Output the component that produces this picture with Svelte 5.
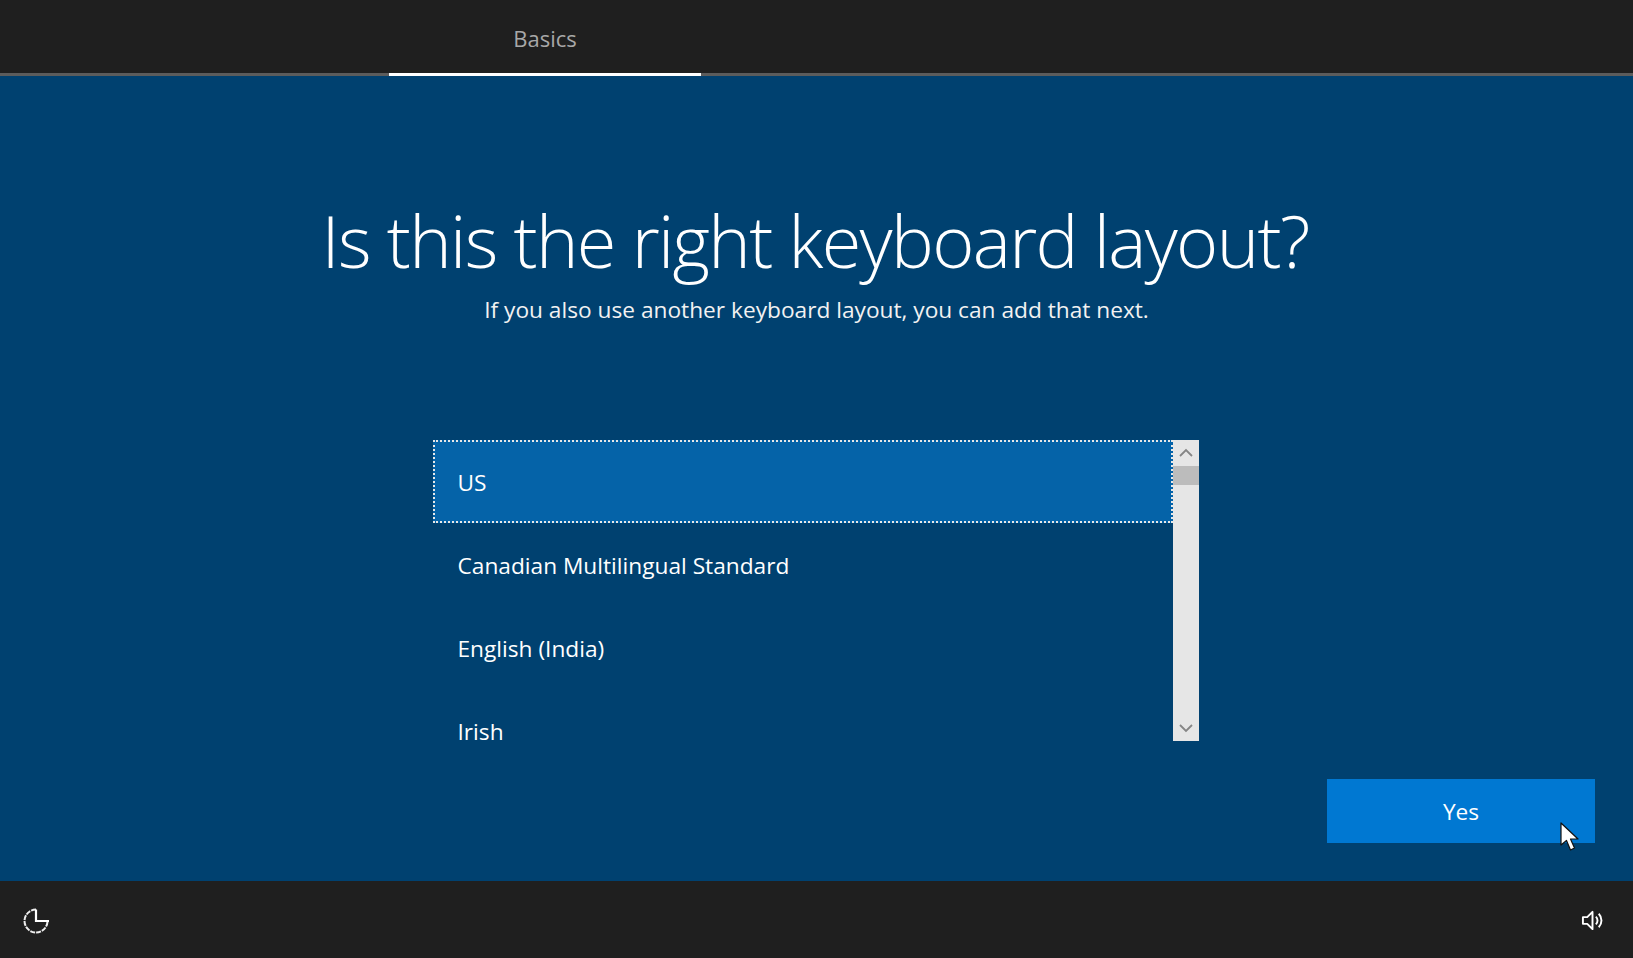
<script>
  const layouts = ["US", "Canadian Multilingual Standard", "English (India)", "Irish"];
  let selected = $state(0);
</script>

<div class="page">
  <header class="topbar">
    <div class="tab">Basics</div>
  </header>

  <main class="main">
    <h1>Is this the right keyboard layout?</h1>
    <p class="sub">If you also use another keyboard layout, you can add that next.</p>

    <div class="picker">
      <ul class="list">
        {#each layouts as name, i}
          <li>
            <button class="row" class:selected={selected === i} onclick={() => (selected = i)}>{name}</button>
          </li>
        {/each}
      </ul>
      <div class="scrollbar">
        <svg class="arrow" viewBox="0 0 26 26" width="26" height="26">
          <path d="M7 16 L13 10 L19 16" fill="none" stroke="#858585" stroke-width="1.8" />
        </svg>
        <div class="thumb"></div>
        <div class="track"></div>
        <svg class="arrow" viewBox="0 0 26 26" width="26" height="26">
          <path d="M7 10 L13 16 L19 10" fill="none" stroke="#858585" stroke-width="1.8" />
        </svg>
      </div>
    </div>

    <div class="actions">
      <button class="yes">Yes</button>
    </div>

    <svg class="cursor" viewBox="0 0 20 30" width="20" height="30">
      <path d="M1 1 L1 23 L6.5 18.5 L10.5 28 L14.5 26 L10.5 17 L18 17 Z" fill="#fff" stroke="#111" stroke-width="1.2" stroke-linejoin="round" />
    </svg>
  </main>

  <footer class="footer">
    <svg class="icon" viewBox="0 0 30 30" width="30" height="30">
      <path d="M15 3.5 A11.5 11.5 0 1 0 26.5 15" fill="none" stroke="#eee" stroke-width="2" stroke-dasharray="5 1" />
      <path d="M15 3.5 V15 H28" fill="none" stroke="#fff" stroke-width="2.2" />
    </svg>
    <svg class="icon" viewBox="0 0 24 24" width="23" height="23">
      <path d="M2 8.5 H6.5 L12 3 V21 L6.5 15.5 H2 Z" fill="none" stroke="#fff" stroke-width="2" stroke-linejoin="round" />
      <path d="M15.5 8 A5.5 5.5 0 0 1 15.5 16" fill="none" stroke="#fff" stroke-width="2" />
      <path d="M18.5 5 A10 10 0 0 1 18.5 19" fill="none" stroke="#fff" stroke-width="2" />
    </svg>
  </footer>
</div>

<style>
  :global(body) {
    margin: 0;
    background: #004170;
  }

  .page {
    height: 958px;
    display: flex;
    flex-direction: column;
    font-family: "Open Sans", "Liberation Sans", sans-serif;
    color: #fff;
    overflow: hidden;
  }

  .topbar {
    height: 73px;
    padding-left: 389px;
    background: #1f1f1f;
    border-bottom: 3px solid #5c5c5c;
    display: flex;
  }

  .tab {
    width: 312px;
    height: 73px;
    border-bottom: 3px solid #fff;
    color: #a8a8a8;
    font-size: 22px;
    line-height: 77px;
    text-align: center;
  }

  .main {
    position: relative;
    flex: 1;
    display: flex;
    flex-direction: column;
    align-items: center;
    background: #004170;
  }

  h1 {
    margin: 119px 3px 0 0;
    font-size: 72px;
    font-weight: 300;
    letter-spacing: -1.68px;
    line-height: 90px;
  }

  .sub {
    margin: 10px 0 0;
    font-size: 22.7px;
    line-height: 30px;
    color: #f2f2f2;
  }

  .picker {
    width: 766px;
    height: 301px;
    margin: 115px 2px 0 0;
    display: flex;
  }

  .list {
    flex: 1;
    margin: 0;
    padding: 0;
    list-style: none;
  }

  .row {
    display: block;
    box-sizing: border-box;
    width: 100%;
    height: 83.3px;
    padding: 1px 0 0 23px;
    border: 2px solid transparent;
    background: none;
    color: #fff;
    font: inherit;
    font-size: 22.7px;
    text-align: left;
  }

  /* last row is cut by the bottom of the list */
  li:last-child .row {
    height: 51px;
    padding-top: 26px;
    border: none;
    padding-left: 25px;
  }

  .row.selected {
    background: #0563a8;
    border: 2px dotted #e8e8e8;
  }

  .scrollbar {
    width: 26px;
    background: #e6e6e6;
    display: flex;
    flex-direction: column;
  }

  .arrow {
    display: block;
    flex: none;
  }

  .thumb {
    height: 19px;
    background: #bcbcbc;
  }

  .track {
    flex: 1;
  }

  .actions {
    align-self: flex-end;
    margin: 38px 38px 0 0;
  }

  .yes {
    display: block;
    width: 268px;
    height: 64px;
    border: none;
    background: #0078d2;
    color: #fff;
    font: inherit;
    font-size: 22.7px;
  }

  .cursor {
    position: absolute;
    left: 1560px;
    top: 746px;
  }

  .footer {
    height: 75px;
    padding: 2px 29px 0 21px;
    background: #1f1f1f;
    display: flex;
    align-items: center;
    justify-content: space-between;
  }

  .icon {
    display: block;
  }
</style>
